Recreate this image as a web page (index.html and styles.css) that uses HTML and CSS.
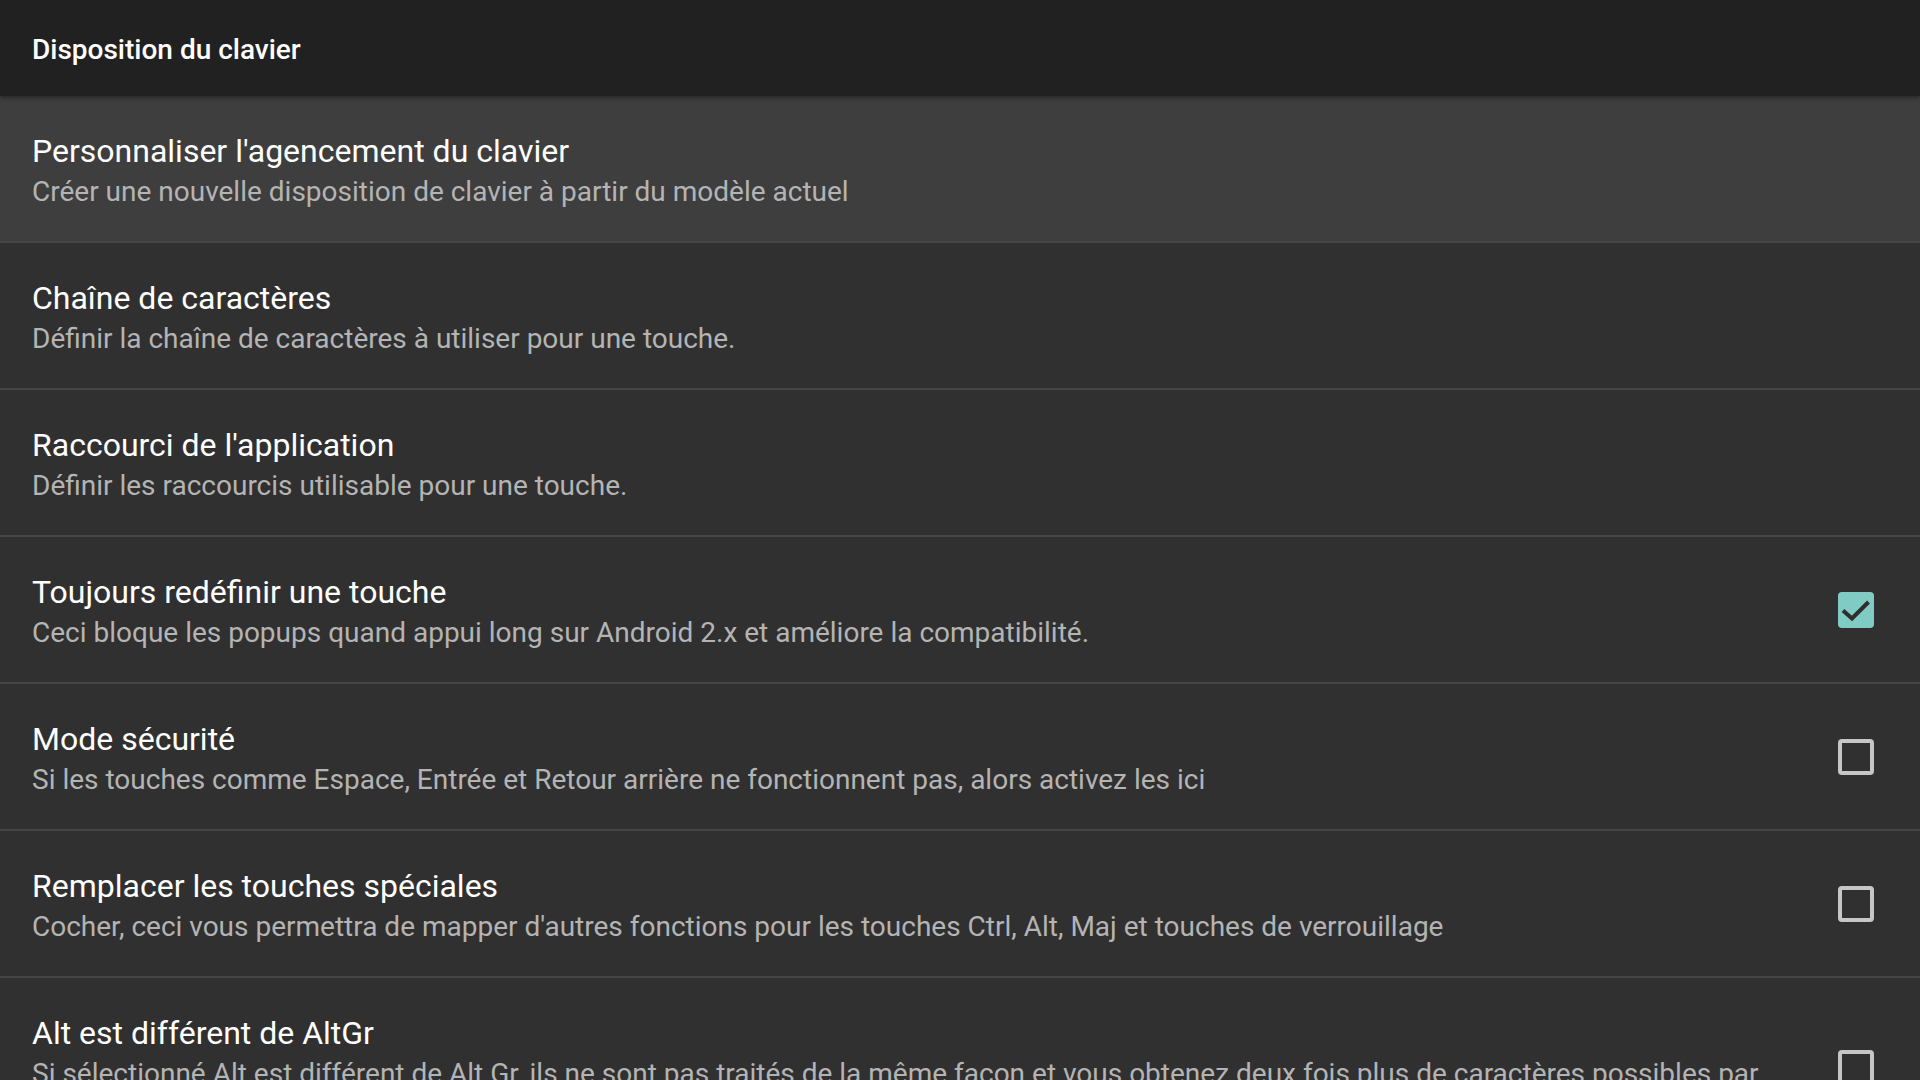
FILE: index.html
```html
<!DOCTYPE html>
<html lang="fr">
<head>
<meta charset="utf-8">
<title>Disposition du clavier</title>
<link rel="stylesheet" href="styles.css">
</head>
<body>
<header class="app-bar">
  <h1 class="app-title">Disposition du clavier</h1>
</header>
<main class="pref-list">
  <div class="pref pref-active">
    <div class="pref-text">
      <div class="pref-title">Personnaliser l'agencement du clavier</div>
      <div class="pref-summary">Créer une nouvelle disposition de clavier à partir du modèle actuel</div>
    </div>
  </div>
  <div class="pref">
    <div class="pref-text">
      <div class="pref-title">Chaîne de caractères</div>
      <div class="pref-summary">Définir la chaîne de caractères à utiliser pour une touche.</div>
    </div>
  </div>
  <div class="pref">
    <div class="pref-text">
      <div class="pref-title">Raccourci de l'application</div>
      <div class="pref-summary">Définir les raccourcis utilisable pour une touche.</div>
    </div>
  </div>
  <div class="pref">
    <div class="pref-text">
      <div class="pref-title">Toujours redéfinir une touche</div>
      <div class="pref-summary">Ceci bloque les popups quand appui long sur Android 2.x et améliore la compatibilité.</div>
    </div>
    <div class="pref-widget">
      <span class="checkbox checked">
        <svg viewBox="0 0 36 36" width="36" height="36"><path d="M5 18.5 L14 26.5 L30.5 10" fill="none" stroke="#2e2e2e" stroke-width="4"/></svg>
      </span>
    </div>
  </div>
  <div class="pref">
    <div class="pref-text">
      <div class="pref-title">Mode sécurité</div>
      <div class="pref-summary">Si les touches comme Espace, Entrée et Retour arrière ne fonctionnent pas, alors activez les ici</div>
    </div>
    <div class="pref-widget"><span class="checkbox"></span></div>
  </div>
  <div class="pref">
    <div class="pref-text">
      <div class="pref-title">Remplacer les touches spéciales</div>
      <div class="pref-summary">Cocher, ceci vous permettra de mapper d'autres fonctions pour les touches Ctrl, Alt, Maj et touches de verrouillage</div>
    </div>
    <div class="pref-widget"><span class="checkbox"></span></div>
  </div>
  <div class="pref">
    <div class="pref-text">
      <div class="pref-title">Alt est différent de AltGr</div>
      <div class="pref-summary">Si sélectionné Alt est différent de Alt Gr, ils ne sont pas traités de la même façon et vous obtenez deux fois plus de caractères possibles par touche.</div>
    </div>
    <div class="pref-widget"><span class="checkbox"></span></div>
  </div>
</main>
</body>
</html>
```

FILE: styles.css
```css
html, body {
  margin: 0;
  padding: 0;
}
body {
  background: #303030;
  font-family: Roboto, "Liberation Sans", sans-serif;
  color: #ffffff;
  height: 1080px;
  overflow: hidden;
}
.app-bar {
  position: relative;
  z-index: 1;
  height: 96px;
  box-sizing: border-box;
  padding: 34px 32px 0;
  background: #212121;
  box-shadow: 0 2px 4px rgba(0, 0, 0, 0.35);
}
.app-title {
  margin: 0;
  font-size: 28px;
  line-height: 32px;
  font-weight: 500;
  color: #ffffff;
}
.pref-list {
  display: flex;
  flex-direction: column;
}
.pref {
  display: flex;
  align-items: center;
  border-bottom: 2px solid #454545;
  background: #303030;
}
.pref-active {
  background: #3e3e3e;
}
.pref-text {
  flex: 1;
  min-width: 0;
  padding: 33px 0 32px 32px;
}
.pref-title {
  font-size: 32px;
  line-height: 44px;
  color: #ffffff;
}
.pref-summary {
  margin-top: 2px;
  font-size: 28px;
  line-height: 34px;
  color: #b4b4b4;
}
.pref-widget {
  flex: 0 0 120px;
  display: flex;
  justify-content: flex-end;
  padding-right: 46px;
  box-sizing: border-box;
}
.checkbox {
  display: block;
  width: 36px;
  height: 36px;
  box-sizing: border-box;
  border: 4px solid #c6c6c6;
  border-radius: 4px;
}
.checkbox.checked {
  border: none;
  background: #80cbc4;
}
.checkbox svg {
  display: block;
}
```
